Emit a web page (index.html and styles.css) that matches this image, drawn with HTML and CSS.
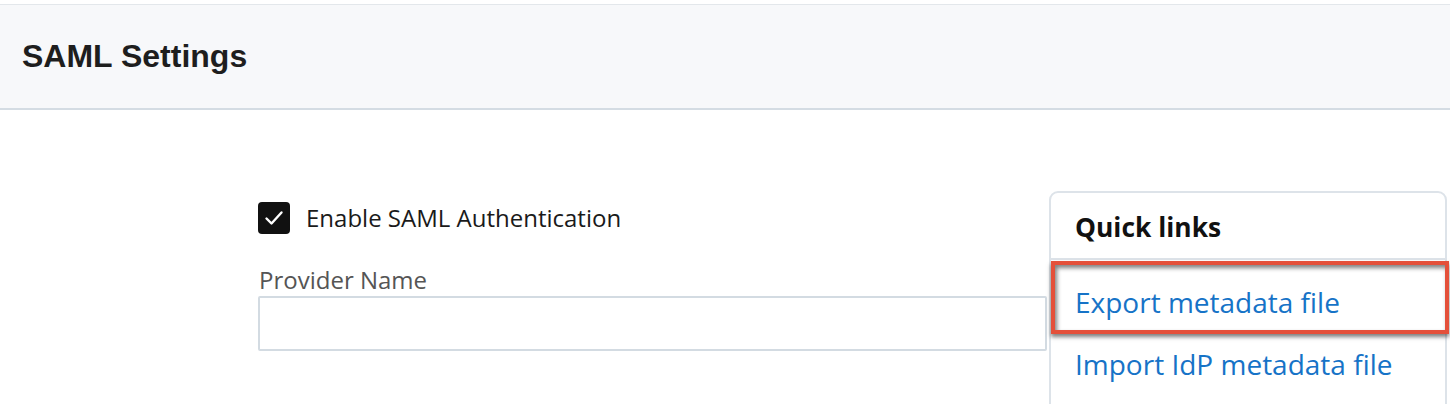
FILE: index.html
```html
<!DOCTYPE html>
<html>
<head>
<meta charset="utf-8">
<link rel="stylesheet" href="styles.css">
</head>
<body>
<div class="page">
  <header class="page-header">
    <h1 class="title">SAML Settings</h1>
  </header>
  <main class="content">
    <section class="form">
      <label class="check-row">
        <span class="checkbox">
          <svg width="32" height="32" viewBox="0 0 32 32"><polyline points="8.5,16.5 13.5,21.5 23.5,10.5" fill="none" stroke="#fff" stroke-width="2.4" stroke-linecap="round" stroke-linejoin="round"/></svg>
        </span>
        <span class="check-label">Enable SAML Authentication</span>
      </label>
      <div class="field-label">Provider Name</div>
      <div class="input"></div>
    </section>
    <aside class="quick">
      <div class="quick-head">Quick links</div>
      <ul class="quick-list">
        <li class="quick-item"><a class="link">Export metadata file</a></li>
        <li class="quick-item"><a class="link">Import IdP metadata file</a></li>
      </ul>
      <div class="highlight"></div>
    </aside>
  </main>
</div>
</body>
</html>
```
FILE: styles.css
```css
html, body {
  margin: 0;
  padding: 0;
  background: #fff;
}
.page {
  width: 1450px;
  height: 404px;
  overflow: hidden;
  padding-top: 4px;
  box-sizing: border-box;
}
.page-header {
  background: #f7f8fa;
  border-top: 1px solid #e3e7eb;
  border-bottom: 2px solid #d4dce3;
  padding: 33px 22px 34px;
}
.title {
  margin: 0;
  font-family: "Liberation Sans", Arial, sans-serif;
  font-weight: bold;
  font-size: 32px;
  line-height: 36px;
  color: #1e1e1e;
}
.content {
  display: flex;
  align-items: flex-start;
  gap: 2px;
  padding: 81px 0 0 258px;
  font-family: "Open Sans", sans-serif;
}
.form {
  width: 789px;
  padding-top: 11px;
}
.check-row {
  display: flex;
  align-items: center;
  gap: 16px;
  height: 32px;
  margin-bottom: 30px;
}
.checkbox {
  width: 32px;
  height: 32px;
  border-radius: 4px;
  background: #111;
  display: block;
}
.checkbox svg {
  display: block;
}
.check-label {
  font-size: 24px;
  color: #1a1a1a;
  line-height: 34px;
}
.field-label {
  font-size: 24px;
  line-height: 32px;
  color: #555;
  padding-left: 1px;
}
.input {
  height: 51px;
  border: 2px solid #d3dbe2;
  border-radius: 2px;
  background: #fff;
}
.quick {
  position: relative;
  width: 394px;
  height: 260px;
  border: 2px solid #dde3e9;
  border-radius: 9px;
  background: #fff;
}
.quick-head {
  font-size: 26.4px;
  font-weight: 700;
  line-height: 36px;
  color: #111;
  padding: 16px 24px 13px;
  border-bottom: 2px solid #dde3e9;
}
.quick-list {
  list-style: none;
  margin: 0;
  padding: 11px 0 0;
}
.quick-item {
  padding: 11px 24px;
}
.link {
  font-size: 28px;
  line-height: 40px;
  color: #1673c7;
  text-decoration: none;
}
.highlight {
  position: absolute;
  left: 0;
  top: 68px;
  width: 390px;
  height: 65px;
  border: 4px solid #e4503a;
  box-shadow: 0 3px 4px rgba(0,0,0,0.5), inset 2px 3px 4px rgba(0,0,0,0.5);
}
```
